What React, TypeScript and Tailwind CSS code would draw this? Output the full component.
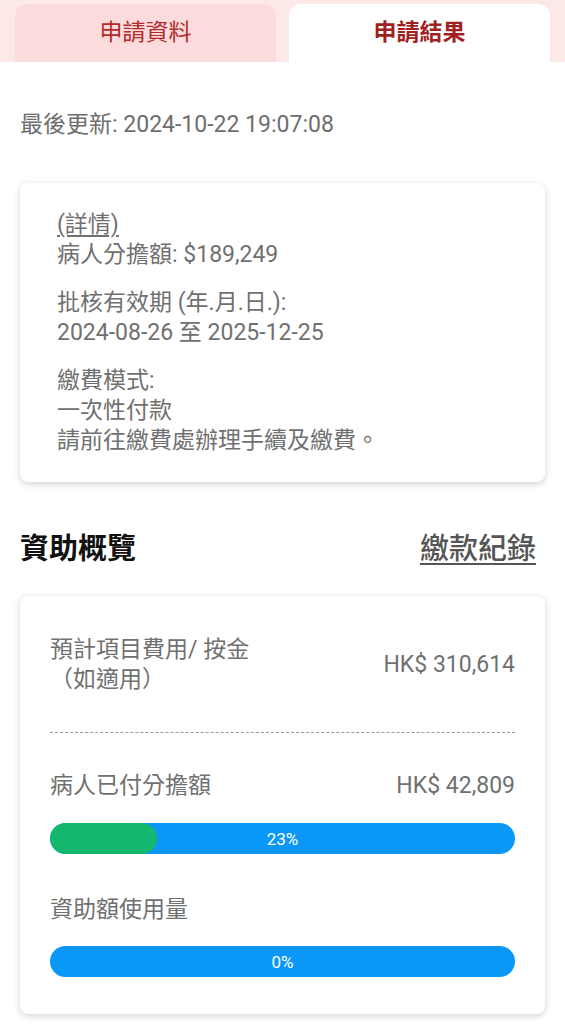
import React from "react";

const font = { fontFamily: 'Roboto, "Noto Sans CJK TC", sans-serif' };

function Bar({ pct }: { pct: number }) {
  return (
    <div className="relative h-[31px] w-full rounded-full bg-[#0a97f7] overflow-hidden">
      {pct > 0 && (
        <div className="h-full rounded-full bg-[#13b76e]" style={{ width: `${pct}%` }} />
      )}
      <div className="absolute inset-0 flex items-center justify-center text-[17px] text-white">
        {pct}%
      </div>
    </div>
  );
}

export default function App() {
  return (
    <div className="min-h-[1024px] bg-white" style={font}>
      <div className="flex h-[62px] items-end gap-[13px] bg-[#fde8e8] px-[15px] pt-[4px]">
        <div className="flex h-[58px] flex-1 items-center justify-center rounded-t-[12px] bg-[#fbdbdb] text-[23px] text-[#b32a2a]">
          申請資料
        </div>
        <div className="flex h-[58px] flex-1 items-center justify-center rounded-t-[12px] bg-white text-[23px] font-semibold text-[#a11f1f]">
          申請結果
        </div>
      </div>

      <div className="px-[20px]">
        <div className="mt-[48px] text-[23px] leading-[30px] text-[#6e6e6e]">最後更新: 2024-10-22 19:07:08</div>

        <div className="mt-[43px] rounded-[8px] bg-white pb-[26px] pl-[37px] pr-[20px] pt-[27px] text-[23px] leading-[30px] text-[#707070] shadow-[0_2px_7px_rgba(0,0,0,0.18)]">
          <div className="underline underline-offset-[3px]">(詳情)</div>
          <div>病人分擔額: $189,249</div>
          <div className="mt-[18px]">批核有效期 (年.月.日.):</div>
          <div>2024-08-26 至 2025-12-25</div>
          <div className="mt-[18px]">繳費模式:</div>
          <div>一次性付款</div>
          <div>請前往繳費處辦理手續及繳費。</div>
        </div>

        <div className="mt-[48px] flex items-center justify-between">
          <div className="text-[29px] font-bold leading-[38px] text-[#111]">資助概覽</div>
          <div className="mr-[9px] text-[29px] font-medium leading-[38px] text-[#555] underline underline-offset-[4px]">繳款紀錄</div>
        </div>

        <div className="mt-[28px] rounded-[8px] bg-white px-[30px] pb-[37px] pt-[39px] text-[23px] leading-[30px] text-[#707070] shadow-[0_2px_7px_rgba(0,0,0,0.18)]">
          <div className="flex items-center justify-between">
            <div>
              <div>預計項目費用/ 按金</div>
              <div>（如適用）</div>
            </div>
            <div>HK$ 310,614</div>
          </div>
          <div className="mt-[37px] border-t-[1.5px] border-dashed border-[#999]" />
          <div className="mt-[38px] flex items-center justify-between">
            <div>病人已付分擔額</div>
            <div>HK$ 42,809</div>
          </div>
          <div className="mt-[22px]">
            <Bar pct={23} />
          </div>
          <div className="mt-[41px]">資助額使用量</div>
          <div className="mt-[21px]">
            <Bar pct={0} />
          </div>
        </div>
      </div>
    </div>
  );
}
